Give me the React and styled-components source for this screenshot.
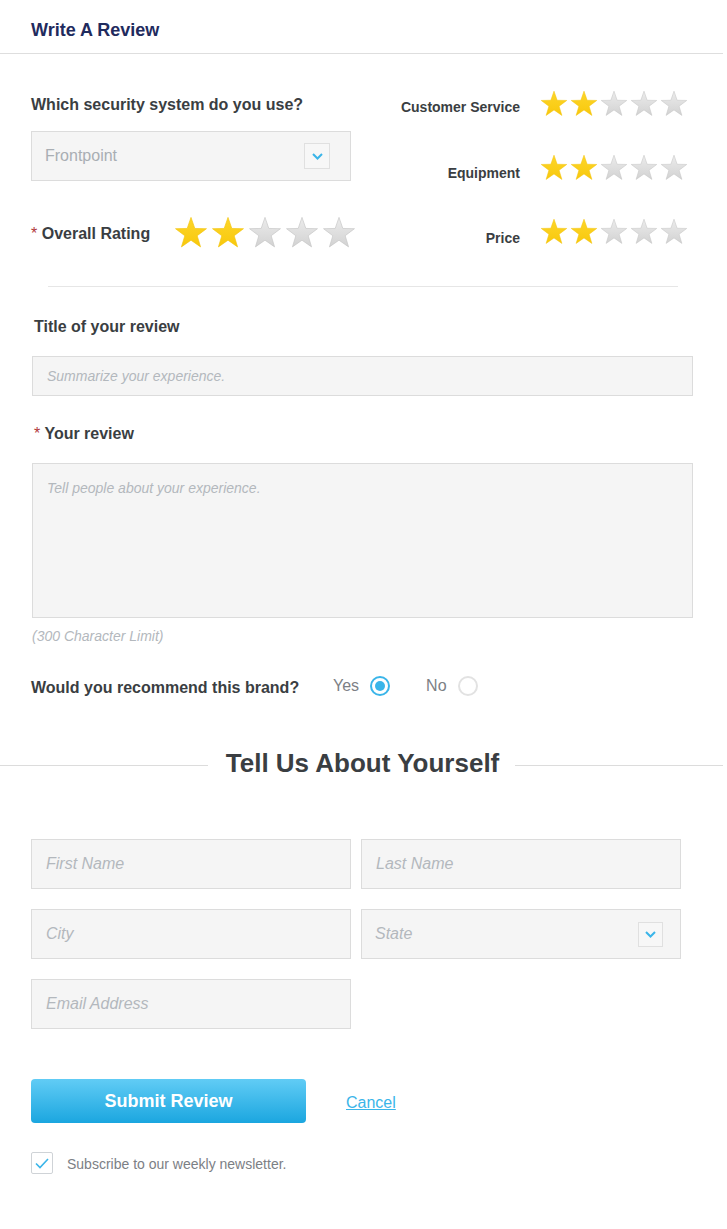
import { useId } from "react";
import styled, { createGlobalStyle } from "styled-components";

const GlobalStyle = createGlobalStyle`
  body {
    margin: 0;
    background: #fff;
    font-family: "Liberation Sans", Arial, sans-serif;
    color: #3a3e42;
  }
`;

const Page = styled.div`
  width: 723px;
  padding-bottom: 54px;
`;

const Header = styled.header`
  height: 34px;
  padding: 19px 31px 0;
  border-bottom: 1px solid #dedede;
`;

const PageTitle = styled.h1`
  margin: 0;
  font-size: 18px;
  line-height: 22px;
  font-weight: 700;
  color: #1f2b5e;
`;

const TopSection = styled.section`
  display: flex;
  justify-content: space-between;
  padding: 36px 35px 0 31px;
`;

const LeftCol = styled.div`
  padding-top: 5px;
  width: 325px;
`;

const Question = styled.p`
  margin: 0 0 16px;
  font-size: 16px;
  line-height: 20px;
  font-weight: 700;
`;

const SelectBox = styled.div`
  box-sizing: border-box;
  width: ${(p) => p.$width || "320px"};
  height: 50px;
  display: flex;
  align-items: center;
  justify-content: space-between;
  padding: 0 ${(p) => p.$padRight || "20px"} 0 13px;
  background: #f5f5f5;
  border: 1px solid #dcdcdc;
  font-size: 16px;
  color: ${(p) => (p.$placeholder ? "#b3b8bd" : "#a9aeb3")};
  font-style: ${(p) => (p.$placeholder ? "italic" : "normal")};
`;

const ChevronBox = styled.span`
  box-sizing: border-box;
  width: ${(p) => p.$size || "26px"};
  height: ${(p) => p.$size || "26px"};
  display: flex;
  align-items: center;
  justify-content: center;
  border: 1px solid #e0e0e0;
  background: #f7f7f7;
`;

const OverallRow = styled.div`
  display: flex;
  align-items: center;
  margin-top: 35px;
`;

const OverallLabel = styled.span`
  width: 143px;
  font-size: 16px;
  line-height: 20px;
  font-weight: 700;
  padding-top: 2px;
`;

const Req = styled.span`
  color: #b13a3a;
  font-weight: 400;
`;

const Stars = styled.div`
  display: flex;
  gap: ${(p) => p.$gap}px;
`;

const RightCol = styled.div`
  display: flex;
  flex-direction: column;
  gap: 36px;
`;

const SubRating = styled.div`
  display: flex;
  align-items: center;
  justify-content: flex-end;
`;

const SubLabel = styled.span`
  font-size: 14px;
  font-weight: 700;
  padding-top: ${(p) => p.$shift}px;
  margin-right: 20px;
`;

const Divider = styled.div`
  margin: 36px 45px 0 48px;
  border-top: 1px solid #e6e6e6;
`;

const ReviewSection = styled.section`
  padding: 0 30px 0 32px;
`;

const FieldLabel = styled.label`
  display: block;
  margin: ${(p) => p.$top}px 0 19px 2px;
  font-size: 16px;
  line-height: 20px;
  font-weight: 700;
`;

const TextInput = styled.input`
  box-sizing: border-box;
  display: block;
  width: 100%;
  height: ${(p) => p.$height || "40px"};
  padding: 0 14px;
  background: #f5f5f5;
  border: 1px solid #dcdcdc;
  border-radius: 0;
  font-family: inherit;
  font-size: ${(p) => p.$fontSize || "14px"};
  outline: none;

  &::placeholder {
    color: #b3b8bd;
    font-style: italic;
  }
`;

const TextArea = styled.textarea`
  box-sizing: border-box;
  display: block;
  width: 100%;
  height: 155px;
  padding: 16px 14px;
  background: #f5f5f5;
  border: 1px solid #dcdcdc;
  border-radius: 0;
  font-family: inherit;
  font-size: 14px;
  resize: none;
  outline: none;

  &::placeholder {
    color: #b3b8bd;
    font-style: italic;
  }
`;

const Hint = styled.p`
  margin: 9px 0 0;
  font-size: 14px;
  line-height: 18px;
  font-style: italic;
  color: #b3b8bd;
`;

const RecommendRow = styled.div`
  display: flex;
  align-items: center;
  height: 24px;
  margin: 29px 0 0 -1px;
`;

const RecommendLabel = styled.span`
  width: 302px;
  font-size: 16px;
  font-weight: 700;
  padding-top: 4px;
`;

const Option = styled.label`
  display: flex;
  align-items: center;
  gap: 11px;
  margin-right: 36px;
  font-size: 16px;
  color: #7c8085;
`;

const Radio = styled.span`
  box-sizing: border-box;
  width: 20px;
  height: 20px;
  border-radius: 50%;
  border: 2px solid ${(p) => (p.$checked ? "#3ab5e9" : "#e2e2e2")};
  display: flex;
  align-items: center;
  justify-content: center;

  &::after {
    content: "";
    width: 10px;
    height: 10px;
    border-radius: 50%;
    background: ${(p) => (p.$checked ? "#3ab5e9" : "transparent")};
  }
`;

const SectionTitleRow = styled.div`
  display: flex;
  align-items: center;
  margin-top: 50px;

  &::before,
  &::after {
    content: "";
    flex: 1;
    margin-top: 4px;
    border-top: 1px solid #dcdcdc;
  }
`;

const SectionTitle = styled.h2`
  margin: 0;
  padding: 0 16px 0 18px;
  font-size: 26px;
  line-height: 30px;
  font-weight: 700;
`;

const PersonGrid = styled.div`
  display: grid;
  grid-template-columns: 320px 320px;
  column-gap: 10px;
  row-gap: 20px;
  margin-top: 61px;
  padding-left: 31px;
`;

const Actions = styled.div`
  display: flex;
  align-items: center;
  margin-top: 50px;
  padding-left: 31px;
`;

const SubmitButton = styled.button`
  width: 275px;
  height: 44px;
  padding-top: 2px;
  border: none;
  border-radius: 4px;
  background: linear-gradient(to bottom, #61ccf5, #1ba6df);
  color: #fff;
  font-family: inherit;
  font-size: 18px;
  font-weight: 700;
  cursor: pointer;
`;

const CancelLink = styled.a`
  margin-left: 40px;
  padding-top: 4px;
  font-size: 16px;
  color: #3ab5e9;
  text-decoration: underline;
  cursor: pointer;
`;

const NewsletterRow = styled.label`
  display: flex;
  align-items: center;
  margin-top: 29px;
  padding-left: 31px;
  font-size: 14px;
  color: #7c8085;
`;

const CheckBox = styled.span`
  box-sizing: border-box;
  width: 22px;
  height: 22px;
  margin-right: 14px;
  border: 1px solid #cfd3d7;
  border-radius: 2px;
  display: flex;
  align-items: center;
  justify-content: center;
`;

const NewsletterText = styled.span`
  padding-top: 2px;
`;

const STAR_POINTS =
  "12,1 14.7,8.78 22.94,8.95 16.37,13.92 18.76,21.8 12,17.1 5.24,21.8 7.63,13.92 1.06,8.95 9.3,8.78";

function Star({ size, filled }) {
  const id = useId().replace(/:/g, "");
  return (
    <svg width={size} height={size} viewBox="0 0 24 24">
      <defs>
        <linearGradient id={`g${id}`} x1="0" y1="0" x2="0" y2="1">
          {filled ? (
            <>
              <stop offset="0" stopColor="#fdd62a" />
              <stop offset="1" stopColor="#f8c80c" />
            </>
          ) : (
            <>
              <stop offset="0" stopColor="#ececec" />
              <stop offset="1" stopColor="#d2d2d2" />
            </>
          )}
        </linearGradient>
      </defs>
      <polygon
        points={STAR_POINTS}
        fill={`url(#g${id})`}
        stroke={filled ? "#f3c30a" : "#c3c3c3"}
        strokeWidth="0.45"
        strokeLinejoin="round"
      />
    </svg>
  );
}

function StarRating({ value, size, gap }) {
  return (
    <Stars $gap={gap}>
      {[1, 2, 3, 4, 5].map((n) => (
        <Star key={n} size={size} filled={n <= value} />
      ))}
    </Stars>
  );
}

function Chevron() {
  return (
    <svg width="11" height="7" viewBox="0 0 11 7">
      <path d="M1 1l4.5 4.5L10 1" fill="none" stroke="#3ab5e9" strokeWidth="2" />
    </svg>
  );
}

const subRatings = [
  { label: "Customer Service", shift: 5 },
  { label: "Equipment", shift: 9 },
  { label: "Price", shift: 11 },
];

export default function App() {
  return (
    <Page>
      <GlobalStyle />
      <Header>
        <PageTitle>Write A Review</PageTitle>
      </Header>

      <TopSection>
        <LeftCol>
          <Question>Which security system do you use?</Question>
          <SelectBox>
            Frontpoint
            <ChevronBox>
              <Chevron />
            </ChevronBox>
          </SelectBox>
          <OverallRow>
            <OverallLabel>
              <Req>*</Req> Overall Rating
            </OverallLabel>
            <StarRating value={2} size={34} gap={3} />
          </OverallRow>
        </LeftCol>
        <RightCol>
          {subRatings.map((r) => (
            <SubRating key={r.label}>
              <SubLabel $shift={r.shift}>{r.label}</SubLabel>
              <StarRating value={2} size={28} gap={2} />
            </SubRating>
          ))}
        </RightCol>
      </TopSection>

      <Divider />

      <ReviewSection>
        <FieldLabel $top={30}>Title of your review</FieldLabel>
        <TextInput placeholder="Summarize your experience." />
        <FieldLabel $top={28}>
          <Req>*</Req> Your review
        </FieldLabel>
        <TextArea placeholder="Tell people about your experience." />
        <Hint>(300 Character Limit)</Hint>
        <RecommendRow>
          <RecommendLabel>Would you recommend this brand?</RecommendLabel>
          <Option>
            Yes <Radio $checked />
          </Option>
          <Option>
            No <Radio />
          </Option>
        </RecommendRow>
      </ReviewSection>

      <SectionTitleRow>
        <SectionTitle>Tell Us About Yourself</SectionTitle>
      </SectionTitleRow>

      <PersonGrid>
        <TextInput $height="50px" $fontSize="16px" placeholder="First Name" />
        <TextInput $height="50px" $fontSize="16px" placeholder="Last Name" />
        <TextInput $height="50px" $fontSize="16px" placeholder="City" />
        <SelectBox $placeholder $padRight="17px">
          State
          <ChevronBox $size="25px">
            <Chevron />
          </ChevronBox>
        </SelectBox>
        <TextInput $height="50px" $fontSize="16px" placeholder="Email Address" />
      </PersonGrid>

      <Actions>
        <SubmitButton>Submit Review</SubmitButton>
        <CancelLink>Cancel</CancelLink>
      </Actions>

      <NewsletterRow>
        <CheckBox>
          <svg width="14" height="11" viewBox="0 0 14 11">
            <path d="M1 5.5l4 4L13 1" fill="none" stroke="#3ab5e9" strokeWidth="1.6" />
          </svg>
        </CheckBox>
        <NewsletterText>Subscribe to our weekly newsletter.</NewsletterText>
      </NewsletterRow>
    </Page>
  );
}
